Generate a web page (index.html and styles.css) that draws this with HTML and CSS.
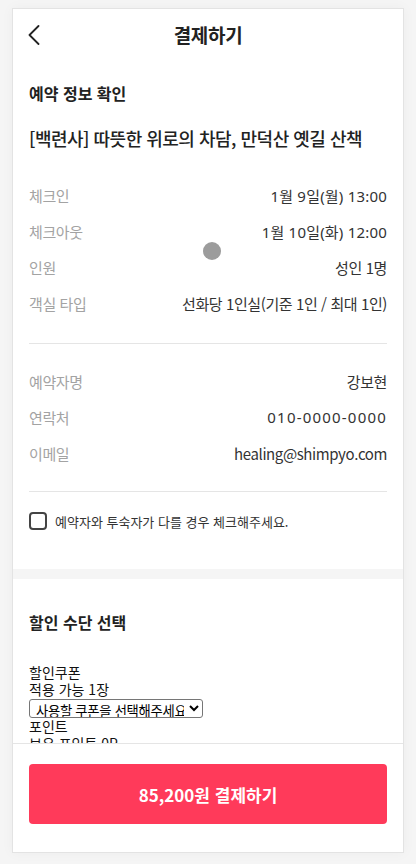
FILE: index.html
```html
<!DOCTYPE html>
<html lang="ko">
<head>
<meta charset="utf-8">
<title>결제하기</title>
<link rel="stylesheet" href="styles.css">
</head>
<body>
<div class="app">
  <header class="topbar">
    <button class="back" aria-label="뒤로">
      <svg width="12" height="20" viewBox="0 0 12 20"><path d="M10.5 1 L1.5 10 L10.5 19" fill="none" stroke="#222" stroke-width="1.8" stroke-linecap="round" stroke-linejoin="round"/></svg>
    </button>
    <h1 class="title">결제하기</h1>
  </header>
  <main class="scroll">
    <section class="info">
      <h2 class="sec-title">예약 정보 확인</h2>
      <h3 class="product">[백련사] 따뜻한 위로의 차담, 만덕산 옛길 산책</h3>
      <dl class="rows first">
        <div class="row"><dt>체크인</dt><dd class="num">1월 9일(월) 13:00</dd></div>
        <div class="row"><dt>체크아웃</dt><dd class="num">1월 10일(화) 12:00</dd></div>
        <div class="row"><dt>인원</dt><dd>성인 1명</dd></div>
        <div class="row"><dt>객실 타입</dt><dd>선화당 1인실(기준 1인 / 최대 1인)</dd></div>
      </dl>
      <hr class="divider">
      <dl class="rows second">
        <div class="row"><dt>예약자명</dt><dd>강보현</dd></div>
        <div class="row"><dt>연락처</dt><dd class="num tel">010-0000-0000</dd></div>
        <div class="row"><dt>이메일</dt><dd>healing@shimpyo.com</dd></div>
      </dl>
      <hr class="divider">
      <label class="check"><span class="box"></span><span class="check-text">예약자와 투숙자가 다를 경우 체크해주세요.</span></label>
    </section>
    <div class="band"></div>
    <section class="discount">
      <h2 class="sec-title">할인 수단 선택</h2>
      <div class="plain-list">
        <div class="plain">할인쿠폰</div>
        <div class="plain">적용 가능 1장</div>
        <select class="coupon"><option>사용할 쿠폰을 선택해주세요</option></select>
        <div class="plain">포인트</div>
        <div class="plain">보유 포인트 0P</div>
      </div>
    </section>
  </main>
  <footer class="footer">
    <button class="pay">85,200원 결제하기</button>
  </footer>
  <span class="touch"></span>
</div>
</body>
</html>
```
FILE: styles.css
```css
* { box-sizing: border-box; }
html, body { margin: 0; padding: 0; }
body {
  background: #f5f5f5;
  font-family: "Noto Sans CJK KR", "Noto Sans", sans-serif;
  color: #222;
  height: 864px;
  overflow: hidden;
}
.app {
  position: relative;
  width: 392px;
  height: 845px;
  margin: 8px auto 0;
  background: #fff;
  border: 1px solid #e3e3e3;
  box-shadow: 0 0 12px rgba(0,0,0,0.04);
  display: flex;
  flex-direction: column;
  overflow: hidden;
}
.topbar {
  height: 52px;
  flex: none;
  display: flex;
  align-items: center;
  justify-content: center;
  position: relative;
}
.back {
  position: absolute;
  left: 15px;
  top: 16px;
  padding: 0;
  border: 0;
  background: none;
  width: 12px;
  height: 20px;
  display: block;
}
.back svg { display: block; }
.title {
  margin: 0;
  font-size: 19px;
  font-weight: 700;
  line-height: 26px;
  letter-spacing: -0.3px;
  color: #222;
}
.scroll {
  flex: 1;
  overflow: hidden;
  min-height: 0;
}
.info { padding: 20px 16px 39px; }
.sec-title {
  margin: 0;
  font-size: 16px;
  font-weight: 700;
  line-height: 24px;
  letter-spacing: 0;
  color: #222;
}
.product {
  margin: 20px 0 0;
  font-size: 18px;
  font-weight: 500;
  line-height: 26px;
  letter-spacing: -0.5px;
  color: #222;
}
.rows { margin: 0; }
.rows.first { margin-top: 26px; }
.rows.second { margin-top: 19px; }
.row {
  display: flex;
  justify-content: space-between;
  align-items: center;
  height: 36px;
  font-size: 15px;
  letter-spacing: -0.4px;
}
.row dt { color: #a3a3a3; }
.row dd { margin: 0; color: #333; }
.row dd.num {
  font-family: "Noto Sans", "Noto Sans CJK KR", sans-serif;
  letter-spacing: 0.2px;
}
.row dd.tel { letter-spacing: 1.2px; }
.divider {
  margin: 22px 0 0;
  border: 0;
  border-top: 1px solid #e5e5e5;
  height: 0;
}
.rows.second + .divider { margin-top: 20px; }
.check {
  margin-top: 20px;
  display: flex;
  align-items: center;
  gap: 8px;
  height: 18px;
}
.box {
  width: 18px;
  height: 18px;
  border: 2px solid #444;
  border-radius: 4px;
  flex: none;
}
.check-text {
  font-size: 13px;
  color: #333;
  letter-spacing: 0;
}
.band { height: 10px; background: #f5f5f5; }
.discount { padding: 31px 16px 0; }
.plain-list { margin-top: 30px; }
.plain {
  font-size: 14px;
  line-height: 17px;
  color: #111;
  letter-spacing: 0;
}
.coupon {
  display: block;
  width: 174px;
  margin: 1px 0 0;
  font-size: 13.33px;
  font-family: "Noto Sans CJK KR", sans-serif;
  height: 19px;
  padding: 0 2px;
  letter-spacing: -0.3px;
  color: #000;
  background: #fff;
  border: 1px solid #767676;
  border-radius: 3px;
}
.footer {
  flex: none;
  border-top: 1px solid #e5e5e5;
  padding: 20px 16px 28px;
  background: #fff;
}
.pay {
  width: 100%;
  height: 60px;
  border: 0;
  border-radius: 4px;
  background: #ff3a5a;
  color: #fff;
  font-family: "Noto Sans CJK KR", sans-serif;
  font-size: 17px;
  font-weight: 700;
  letter-spacing: 0;
}
.touch {
  position: absolute;
  left: 190px;
  top: 233px;
  width: 18px;
  height: 18px;
  border-radius: 50%;
  background: #9c9c9c;
}
```
